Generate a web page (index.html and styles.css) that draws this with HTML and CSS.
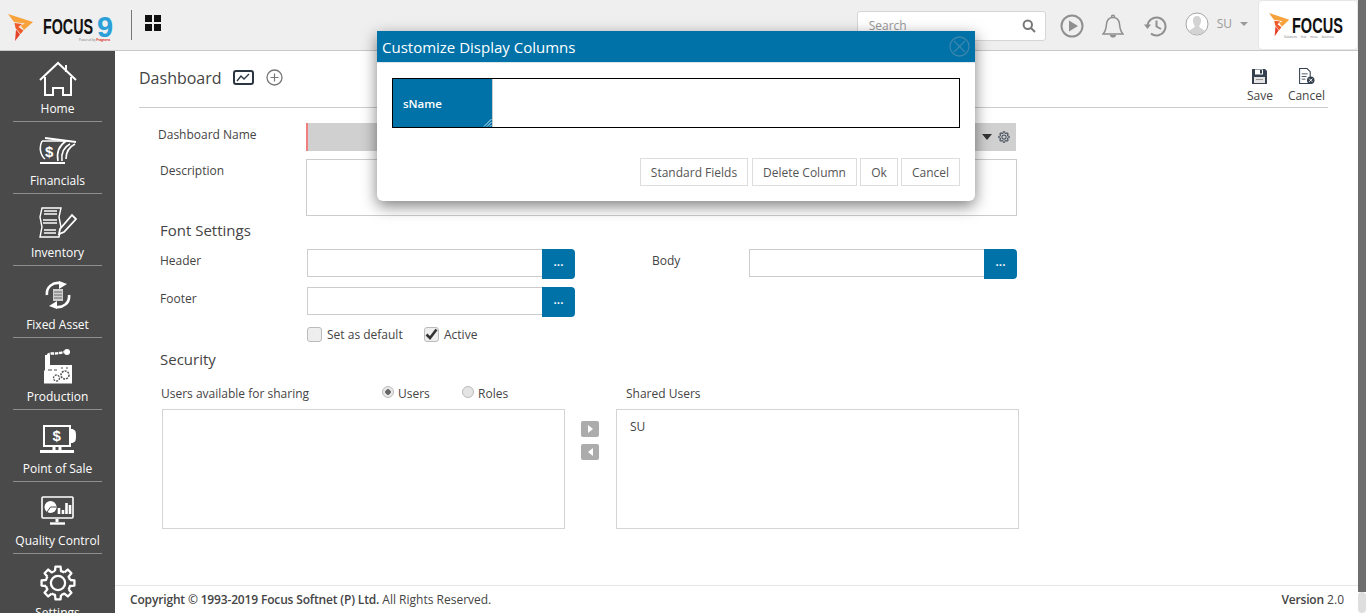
FILE: index.html
```html
<!DOCTYPE html>
<html lang="en">
<head>
    <meta charset="UTF-8">
    <meta name="viewport" content="width=device-width, initial-scale=1.0">
    <title>Dashboard</title>
    <link rel="stylesheet" href="styles.css">
</head>
<body>
    <svg class="defs" width="0" height="0">
        <defs>
            <g id="gear">
                <g id="gear-half">
                    <path id="gear-seg" d="M16.85 7.4 L17.3 2.7 H22.7 L23.15 7.4 A13 13 0 0 1 26.7 8.86"/>
                    <use href="#gear-seg" transform="rotate(45 20 20)"/>
                    <use href="#gear-seg" transform="rotate(90 20 20)"/>
                    <use href="#gear-seg" transform="rotate(135 20 20)"/>
                </g>
                <use href="#gear-half" transform="rotate(180 20 20)"/>
            </g>
            <g id="flame-mark">
                <polygon fill="#f7a23b" points="0,0 25,8 16,16 12.500,11.500 17,9.500 6,8"/>
                <polygon fill="#ee5a2a" points="6.500,9 14,10 10.500,13 15.500,16.500 12.500,20 7.500,14"/>
                <polygon fill="#e5402a" points="8,15.500 12,20.500 7,27"/>
            </g>
        </defs>
    </svg>

    <div class="page">
        <div class="app">
            <!-- Top bar -->
            <header class="topbar">
                <div class="brand">
                    <svg class="flame" width="26" height="28" viewBox="0 0 26 28"><use href="#flame-mark"/></svg>
                    <div class="brand-name">FOCUS</div>
                    <div class="brand-mark">
                        <span class="brand-nine">9</span>
                        <span class="brand-sub">Powered by <b>Pragnera</b></span>
                    </div>
                </div>
                <div class="top-sep"></div>
                <div class="apps-icon"><span></span><span></span><span></span><span></span></div>

                <div class="top-tools">
                    <div class="search">
                        <span>Search</span>
                        <svg width="14" height="14" viewBox="0 0 14 14" fill="none" stroke="#777" stroke-width="2"><circle cx="5.800" cy="5.800" r="4.200"/><path d="M9 9 L13 13"/></svg>
                    </div>
                    <svg class="tool-play" width="24" height="24" viewBox="0 0 24 24" fill="none" stroke="#8f8f8f" stroke-width="2"><circle cx="12" cy="12" r="10.500"/><polygon fill="#8f8f8f" stroke="none" points="9,6.500 18,12 9,17.500"/></svg>
                    <svg class="tool-bell" width="22" height="24" viewBox="0 0 22 24" fill="none" stroke="#8f8f8f" stroke-width="1.500"><path d="M1 20 C4 17 4 14 4.500 10 C5 6 7.500 3.500 11 3.500 C14.500 3.500 17 6 17.500 10 C18 14 18 17 21 20 Z"/><path d="M9.500 3 C9.500 .8 12.500 .8 12.500 3"/><path d="M8.500 21 C9 23.500 13 23.500 13.500 21" fill="#8f8f8f"/></svg>
                    <svg class="tool-history" width="23" height="22" viewBox="0 0 23 22" fill="none" stroke="#8f8f8f" stroke-width="2"><path d="M3.500 11 A9 9 0 1 1 7 18.600"/><polygon fill="#8f8f8f" stroke="none" points="0,9.500 7,9.500 3.500,14"/><path d="M12.500 5.500 V11.500 L17 14"/></svg>
                    <svg class="tool-user" width="24" height="24" viewBox="0 0 24 24"><circle cx="12" cy="12" r="11" fill="#fff" stroke="#a5a5a5" stroke-width="1"/><path fill="#d3d3d3" d="M12 4 C15 4 16.500 6.500 16 9.500 C15.700 11.500 14.800 13 14 14 C14.500 16 18 17 20 19 A11 11 0 0 1 4 19 C6 17 9.500 16 10 14 C9.200 13 8.300 11.500 8 9.500 C7.500 6.500 9 4 12 4 Z"/></svg>
                    <span class="user-name">SU</span>
                    <span class="user-caret"></span>
                    <div class="logo-box">
                        <svg class="logo-flame" width="21" height="24" viewBox="0 0 26 28" preserveAspectRatio="none"><use href="#flame-mark"/></svg>
                        <div class="logo-text">
                            <div class="logo-name">FOCUS</div>
                            <div class="logo-sub">Solutions that move business</div>
                        </div>
                    </div>
                </div>
            </header>

            <div class="body-wrap">
                <!-- Left menu -->
                <nav class="sidebar">
                    <div class="nav-item">
                        <div class="nav-icon">
                            <svg width="38" height="36" viewBox="0 0 38 36" fill="none" stroke="#fff" stroke-width="2"><path d="M1 19 L19 2 L37 19"/><path d="M27 4 V11"/><path d="M6 16 V34 H14 V27 H24 V34 H32 V16"/></svg>
                        </div>
                        <div class="nav-label">Home</div>
                    </div>
                    <div class="nav-item">
                        <div class="nav-icon">
                            <svg width="38" height="28" viewBox="0 0 38 28" fill="none" stroke="#fff" stroke-width="1.600"><path d="M6 1 L37 5" stroke-width="2"/><path d="M3 4 H27 C21 8 17 14 19 24"/><path d="M3 4 C0 10 1 18 6 22"/><path d="M31 7 C25 10 22 16 23 24"/><path d="M36 7 C30 10 27 15 27 22"/><path d="M1 26 H26" stroke-width="2"/><text x="6" y="20" class="icon-dollar">$</text></svg>
                        </div>
                        <div class="nav-label">Financials</div>
                    </div>
                    <div class="nav-item">
                        <div class="nav-icon">
                            <svg width="38" height="31" viewBox="0 0 38 31" fill="none" stroke="#fff" stroke-width="1.400"><path d="M3 1 H22 L20 10 L22 20 L20 30 H1 L3 20 L1 10 Z"/><path d="M5 4 H18 M5 7 H18 M4 13 H18 M4 16 H18 M5 23 H17 M5 26 H17" stroke="#cfcfcf" stroke-width="2"/><path d="M21 22 L33 8 L37 12 L25 25 L20 27 Z" fill="#4a4a4a" stroke-width="1.800"/></svg>
                        </div>
                        <div class="nav-label">Inventory</div>
                    </div>
                    <div class="nav-item">
                        <div class="nav-icon">
                            <svg width="26" height="28" viewBox="0 0 26 28" fill="none" stroke="#fff" stroke-width="2.600"><path d="M2 14 C1 6 8 1 15 2"/><polygon fill="#fff" stroke="none" points="14,0 22,3 14,8"/><path d="M24 14 C25 22 18 27 11 26"/><polygon fill="#fff" stroke="none" points="12,20 12,28 4,25"/><path d="M8 8 H18 V20 H8 Z" fill="#cfcfcf" stroke="none"/><path d="M9 11 H17 M9 14 H17 M9 17 H17" stroke="#666" stroke-width="1"/></svg>
                        </div>
                        <div class="nav-label">Fixed Asset</div>
                    </div>
                    <div class="nav-item">
                        <div class="nav-icon">
                            <svg width="30" height="36" viewBox="0 0 30 36"><path d="M4.500 7 C5 4 8 4.500 10 4.500 C14 4.500 17 4 21 3" fill="none" stroke="#fff" stroke-width="2.400" stroke-dasharray="3.500 .8"/><circle cx="24" cy="3" r="3" fill="#fff"/><path fill="#fff" d="M2 6 H7 V16 H29 V34.500 H1 V22 L2 21 Z"/><path d="M5 21 H9 M11 21 H14 M18 19 H20 M23 19 H25" stroke="#888" stroke-width="1.500"/><circle cx="22" cy="26" r="4" fill="#fff" stroke="#555" stroke-width="1.600" stroke-dasharray="2 1"/><circle cx="13.500" cy="29" r="3" fill="#fff" stroke="#555" stroke-width="1.300" stroke-dasharray="2 1"/></svg>
                        </div>
                        <div class="nav-label">Production</div>
                    </div>
                    <div class="nav-item">
                        <div class="nav-icon">
                            <svg width="36" height="28" viewBox="0 0 36 28" fill="none" stroke="#fff" stroke-width="2"><rect x="4" y="1" width="26" height="20"/><path d="M31 4 C35 4 36 6 36 11 C36 16 35 18 31 18" fill="#fff" stroke="none"/><path d="M14 21 V25 M20 21 V25" stroke-width="3"/><path d="M0 26.500 H34" stroke-width="3"/><text x="12.500" y="16" class="icon-dollar">$</text></svg>
                        </div>
                        <div class="nav-label">Point of Sale</div>
                    </div>
                    <div class="nav-item">
                        <div class="nav-icon">
                            <svg width="33" height="29" viewBox="0 0 33 29" fill="none" stroke="#fff" stroke-width="1.600"><rect x="1" y="1" width="31" height="21" rx="1"/><circle cx="9.500" cy="11" r="6" fill="#fff" stroke="none"/><path d="M9.500 11 L15 11 M9.500 11 L6 16" stroke="#4a4a4a" stroke-width="1"/><path d="M18 18 V12 M22 18 V14 M25.500 18 V7 M29 18 V9" stroke-width="2.600"/><path d="M16 23 V26" stroke-width="3"/><path d="M9 27.500 H24" stroke-width="2.400"/></svg>
                        </div>
                        <div class="nav-label">Quality Control</div>
                    </div>
                    <div class="nav-item">
                        <div class="nav-icon">
                            <svg width="38" height="38" viewBox="0 0 40 40" fill="none" stroke="#fff" stroke-width="2.400" stroke-linejoin="round"><use href="#gear"/><circle cx="20" cy="20" r="7.500"/></svg>
                        </div>
                        <div class="nav-label">Settings</div>
                    </div>
                </nav>

                <main class="main">
                    <div class="content">
                        <div class="title-bar">
                            <h1>Dashboard</h1>
                            <svg class="chart-icon" width="21" height="15" viewBox="0 0 21 15" fill="none"><rect x="1" y="1" width="19" height="13" rx="2" stroke="#2b3642" stroke-width="2"/><path d="M4 11 L8 6 L11 9 L16 4" stroke="#2b3642" stroke-width="1.300"/></svg>
                            <svg class="plus-icon" width="17" height="17" viewBox="0 0 17 17" fill="none" stroke="#777"><circle cx="8.500" cy="8.500" r="7.500" stroke-width="1.300"/><path d="M8.500 4.500 V12.500 M4.500 8.500 H12.500" stroke-width="1.200"/></svg>
                            <div class="title-actions">
                                <div class="action action-save">
                                    <svg width="17" height="17" viewBox="0 0 17 17"><path fill="#35414f" d="M1 1 H14 L16 3 V16 H1 Z"/><rect x="4" y="1.500" width="8" height="5" fill="#fff"/><rect x="9" y="2" width="2" height="3.500" fill="#35414f"/><rect x="3" y="9" width="11" height="6" fill="#e4e4e4"/><rect x="5" y="11" width="7" height="1" fill="#999"/></svg>
                                    <span>Save</span>
                                </div>
                                <div class="action action-cancel">
                                    <svg width="17" height="17" viewBox="0 0 16 16" fill="none" stroke="#35414f"><path d="M1.500 .5 H8.500 L11.500 3.500 V14.500 H1.500 Z" fill="#fff"/><path d="M3.500 5.500 H9 M3.500 8 H8 M3.500 10.500 H7" stroke-width=".8"/><circle cx="12" cy="11.500" r="3.500" fill="#35414f" stroke="none"/><path d="M10.500 10 L13.500 13 M13.500 10 L10.500 13" stroke="#fff" stroke-width=".9"/></svg>
                                    <span>Cancel</span>
                                </div>
                            </div>
                        </div>

                        <form class="form">
                            <div class="row row-name">
                                <label class="name-label">Dashboard Name</label>
                                <div class="name-input">
                                    <span class="name-caret"></span>
                                    <svg width="12" height="12" viewBox="0 0 40 40" fill="none" stroke="#4b5560" stroke-width="3.500" stroke-linejoin="round"><use href="#gear"/><circle cx="20" cy="20" r="7"/></svg>
                                </div>
                            </div>
                            <div class="row row-desc">
                                <label class="desc-label">Description</label>
                                <div class="desc-input"></div>
                            </div>
                            <h2 class="section font-section">Font Settings</h2>
                            <div class="row row-font">
                                <label class="field-label">Header</label>
                                <div class="picker"><div class="picker-input"></div><div class="picker-btn">...</div></div>
                                <label class="body-label">Body</label>
                                <div class="picker"><div class="picker-input"></div><div class="picker-btn">...</div></div>
                            </div>
                            <div class="row row-font row-footer">
                                <label class="field-label">Footer</label>
                                <div class="picker"><div class="picker-input"></div><div class="picker-btn">...</div></div>
                            </div>
                            <div class="row row-check">
                                <span class="check"></span>
                                <span class="check-text default-text">Set as default</span>
                                <span class="check">
                                    <svg width="13" height="12" viewBox="0 0 13 12"><path d="M1.500 6.500 L5 10 L11.500 1.500" fill="none" stroke="#333" stroke-width="2.600"/></svg>
                                </span>
                                <span class="check-text">Active</span>
                            </div>
                            <h2 class="section security-section">Security</h2>
                            <div class="row row-users">
                                <span class="users-label">Users available for sharing</span>
                                <span class="radio-group group-users"><span class="radio radio-on"></span><span>Users</span></span>
                                <span class="radio-group group-roles"><span class="radio"></span><span>Roles</span></span>
                                <span>Shared Users</span>
                            </div>
                            <div class="row row-lists">
                                <div class="list"></div>
                                <div class="move-btns">
                                    <div class="move-btn"><span class="arrow-right"></span></div>
                                    <div class="move-btn"><span class="arrow-left"></span></div>
                                </div>
                                <div class="list list-shared">SU</div>
                            </div>
                        </form>
                    </div>
                    <footer class="footer">
                        <span><b>Copyright © 1993-2019 Focus Softnet (P) Ltd.</b> All Rights Reserved.</span>
                        <span><b>Version</b> 2.0</span>
                    </footer>
                </main>
            </div>
        </div>
        <div class="scrollbar"><div class="scroll-thumb"></div><div class="scroll-rest"></div></div>
    </div>

    <!-- Customize columns dialog -->
    <div class="modal">
        <div class="modal-head">
            <span>Customize Display Columns</span>
            <svg width="21" height="21" viewBox="0 0 21 21" fill="none" stroke="#3a86ad"><circle cx="10.500" cy="10.500" r="9.500" stroke-width="1.300"/><path d="M5 5 L16 16 M16 5 L5 16" stroke-width="1.300"/></svg>
        </div>
        <div class="modal-body">
            <div class="columns-box">
                <div class="column-cell">
                    sName
                    <svg class="grip" width="9" height="9" viewBox="0 0 9 9" stroke="#fff" stroke-width=".8"><path d="M1 8.500 L8.500 1 M4 8.500 L8.500 4 M7 8.500 L8.500 7"/></svg>
                </div>
            </div>
            <div class="modal-buttons">
                <button type="button" class="btn-standard">Standard Fields</button>
                <button type="button" class="btn-delete">Delete Column</button>
                <button type="button" class="btn-ok">Ok</button>
                <button type="button" class="btn-cancel">Cancel</button>
            </div>
        </div>
    </div>
</body>
</html>
```

FILE: styles.css
```css
* {
    box-sizing: border-box;
}
html, body {
    margin: 0;
    padding: 0;
    height: 100%;
    overflow: hidden;
}
body {
    font-family: "Open Sans", Arial, sans-serif;
    font-size: 12px;
    color: #444;
    background-color: #fff;
}
.defs {
    position: absolute;
}
.page {
    display: flex;
    height: 613px;
}
.app {
    flex: 1;
    min-width: 0;
    display: flex;
    flex-direction: column;
}
.scrollbar {
    width: 8px;
    display: flex;
    flex-direction: column;
}
.scroll-thumb {
    height: 592px;
    background-color: #6e6e6e;
}
.scroll-rest {
    flex: 1;
    background-color: #dedede;
    border-radius: 4px;
}

/* Top bar */
.topbar {
    height: 51px;
    flex: none;
    display: flex;
    align-items: center;
    background-color: #efefef;
    border-bottom: 1px solid #c8c8c8;
}
.brand {
    display: flex;
    align-items: flex-start;
    padding: 14px 0 0 8px;
    height: 50px;
    width: 131px;
}
.flame {
    flex: none;
}
.brand-name {
    width: 50px;
    margin: 3px 0 0 9px;
    font-family: "Liberation Sans", Arial, sans-serif;
    font-weight: 700;
    font-size: 22px;
    line-height: 20px;
    color: #111;
    transform: scaleX(.65);
    transform-origin: left;
}
.brand-mark {
    margin: 2px 0 0 4px;
    width: 18px;
    display: flex;
    flex-direction: column;
    align-items: flex-start;
}
.brand-nine {
    font-family: "Liberation Sans", Arial, sans-serif;
    font-weight: 700;
    font-size: 29px;
    line-height: 22px;
    color: #2a9fd8;
}
.brand-sub {
    margin-left: -18px;
    font-size: 3px;
    line-height: 4px;
    white-space: nowrap;
    color: #777;
}
.brand-sub b {
    color: #d8342a;
}
.top-sep {
    width: 1px;
    height: 30px;
    background-color: #777;
}
.apps-icon {
    display: grid;
    grid-template-columns: 7px 7px;
    gap: 2px;
    margin: -4px 0 0 13px;
}
.apps-icon span {
    height: 7px;
    background-color: #111;
}
.top-tools {
    margin-left: auto;
    display: flex;
    align-items: center;
}
.search {
    width: 189px;
    height: 30px;
    display: flex;
    align-items: center;
    justify-content: space-between;
    padding: 0 9px 0 11px;
    background-color: #fff;
    border: 1px solid #d6d6d6;
    border-radius: 3px;
    color: #999;
    margin-top: 1px;
}
.tool-play {
    margin-left: 14px;
    margin-top: 2px;
}
.tool-bell {
    margin-left: 18px;
    margin-top: 2px;
}
.tool-history {
    margin-left: 20px;
    margin-top: 2px;
}
.tool-user {
    margin-left: 18px;
    margin-top: -2px;
}
.user-name {
    margin-left: 8px;
    margin-top: -4px;
    color: #999;
}
.user-caret {
    margin: -3px 0 0 8px;
    border-left: 4px solid transparent;
    border-right: 4px solid transparent;
    border-top: 4px solid #999;
}
.logo-box {
    margin-left: 10px;
    width: 100px;
    height: 50px;
    background-color: #fff;
    border: 1px solid #e6e6e6;
    border-radius: 4px;
    display: flex;
    align-items: flex-start;
    padding: 12px 0 0 10px;
}
.logo-flame {
    flex: none;
}
.logo-text {
    width: 50px;
    flex: none;
    margin-left: 2px;
}
.logo-name {
    font-family: "Liberation Sans", Arial, sans-serif;
    font-weight: 700;
    font-size: 22px;
    line-height: 19px;
    color: #111;
    transform: scaleX(.66);
    transform-origin: left;
    margin-top: 3px;
}
.logo-sub {
    margin-left: -8px;
    font-size: 3px;
    line-height: 4px;
    color: #777;
    white-space: nowrap;
    word-spacing: 3px;
}

.body-wrap {
    flex: 1;
    min-height: 0;
    display: flex;
}

/* Left menu */
.sidebar {
    width: 115px;
    flex: none;
    background-color: #4a4a4a;
    overflow: hidden;
}
.nav-item {
    height: 72px;
    margin: 0 13px;
    padding-top: 6px;
    display: flex;
    flex-direction: column;
    border-bottom: 1px solid #8e8e8e;
    color: #fff;
    text-align: center;
}
.nav-item:first-child {
    height: 71px;
    padding-top: 5px;
}
.nav-icon {
    flex: 1;
    display: flex;
    align-items: center;
    justify-content: center;
}
.nav-label {
    line-height: 16px;
    padding-bottom: 4px;
    white-space: nowrap;
    margin: 0 -13px;
}
.icon-dollar {
    font-family: "Liberation Sans", Arial, sans-serif;
    font-weight: 700;
    font-size: 15px;
    fill: #fff;
    stroke: none;
}

/* Main area */
.main {
    flex: 1;
    min-width: 0;
    display: flex;
    flex-direction: column;
}
.content {
    flex: 1;
    min-height: 0;
}
.title-bar {
    height: 57px;
    margin: 0 30px 0 24px;
    display: flex;
    align-items: center;
    border-bottom: 1px solid #ccc;
    padding-bottom: 3px;
}
.title-bar h1 {
    margin: 0;
    font-size: 16px;
    font-weight: 400;
    color: #444;
}
.chart-icon {
    margin-left: 11px;
}
.plus-icon {
    margin-left: 12px;
}
.title-actions {
    margin-left: auto;
    align-self: flex-start;
    display: flex;
    padding-top: 17px;
}
.action {
    display: flex;
    flex-direction: column;
    align-items: center;
}
.action svg {
    margin-bottom: 3px;
}
.action span {
    line-height: 16px;
}
.action-save {
    margin-right: 15px;
}
.action-cancel {
    margin-right: 3px;
}
.form {
    padding: 15px 0 0 45px;
}
.row {
    display: flex;
}
.row-name {
    height: 28px;
}
.name-label {
    width: 148px;
    margin-left: -2px;
    line-height: 24px;
}
.name-input {
    width: 710px;
    height: 28px;
    display: flex;
    align-items: center;
    justify-content: flex-end;
    gap: 6px;
    padding-right: 6px;
    background-color: #d0d0d0;
    border-left: 2px solid #f08080;
}
.name-caret {
    border-left: 5px solid transparent;
    border-right: 5px solid transparent;
    border-top: 6px solid #333;
}
.row-desc {
    margin-top: 8px;
}
.desc-label {
    width: 146px;
    line-height: 24px;
}
.desc-input {
    width: 711px;
    height: 57px;
    border: 1px solid #ccc;
}
.section {
    margin: 0;
    font-size: 15px;
    font-weight: 400;
    color: #444;
    line-height: 20px;
}
.font-section {
    padding: 4px 0 9px;
}
.field-label {
    width: 147px;
    line-height: 23px;
}
.row-font {
    height: 30px;
}
.row-footer {
    margin-top: 8px;
}
.picker {
    width: 268px;
    display: flex;
    align-items: flex-start;
}
.picker-input {
    flex: 1;
    height: 28px;
    border: 1px solid #ccc;
    border-right: 0;
}
.picker-btn {
    width: 33px;
    height: 30px;
    background-color: #0072a8;
    border-radius: 0 4px 4px 0;
    color: #fff;
    font-weight: 600;
    text-align: center;
    line-height: 26px;
}
.body-label {
    width: 174px;
    padding-left: 77px;
    line-height: 23px;
}
.row-check {
    margin: 9px 0 0 147px;
    height: 16px;
    align-items: center;
}
.check {
    width: 15px;
    height: 15px;
    display: flex;
    align-items: center;
    justify-content: center;
    background-color: #eee;
    border: 1px solid #bbb;
    border-radius: 3px;
}
.check-text {
    margin-left: 5px;
}
.default-text {
    width: 97px;
}
.security-section {
    padding: 7px 0;
}
.row-users {
    margin: 8px 0 0 1px;
    height: 18px;
    align-items: center;
}
.users-label {
    width: 221px;
}
.radio-group {
    display: flex;
    align-items: center;
    gap: 4px;
}
.group-users {
    width: 80px;
}
.group-roles {
    width: 164px;
}
.radio {
    width: 12px;
    height: 12px;
    margin-top: -2px;
    border-radius: 50%;
    background-color: #e4e4e4;
    border: 1px solid #bbb;
}
.radio-on {
    background: radial-gradient(circle, #666 0 2.5px, #e8e8e8 3px);
}
.row-lists {
    margin: 7px 0 0 2px;
}
.list {
    width: 403px;
    height: 120px;
    border: 1px solid #d4d4d4;
}
.list-shared {
    padding: 8px 13px;
}
.move-btns {
    width: 51px;
    padding: 12px 0 0 16px;
}
.move-btn {
    width: 18px;
    height: 16px;
    margin-bottom: 7px;
    display: flex;
    align-items: center;
    justify-content: center;
    background-color: #acacac;
    border-radius: 2px;
}
.arrow-right {
    border-top: 4px solid transparent;
    border-bottom: 4px solid transparent;
    border-left: 5px solid #fff;
}
.arrow-left {
    border-top: 4px solid transparent;
    border-bottom: 4px solid transparent;
    border-right: 5px solid #fff;
}
.footer {
    height: 28px;
    flex: none;
    display: flex;
    align-items: center;
    justify-content: space-between;
    padding: 0 14px 0 15px;
    border-top: 1px solid #e6e6e6;
}
.footer b {
    font-weight: 600;
    letter-spacing: -.16px;
}

/* Dialog */
.modal {
    position: absolute;
    left: 377px;
    top: 31px;
    width: 598px;
    height: 170px;
    background-color: #fff;
    border-radius: 0 0 6px 6px;
    box-shadow: 0 5px 15px rgba(0, 0, 0, .5);
}
.modal-head {
    height: 32px;
    display: flex;
    align-items: center;
    justify-content: space-between;
    padding: 0 5px;
    background-color: #0072a8;
    border-bottom: 1px solid #d9e6ee;
    color: #fff;
    font-size: 15px;
}
.modal-body {
    padding: 15px 15px 0;
}
.columns-box {
    height: 50px;
    border: 1px solid #000;
}
.column-cell {
    position: relative;
    width: 100px;
    height: 48px;
    padding-left: 10px;
    background-color: #0072a8;
    border-right: 1px solid #ccc;
    color: #fff;
    font-size: 11.5px;
    font-weight: 600;
    line-height: 49px;
}
.grip {
    position: absolute;
    right: 0;
    bottom: 0;
}
.modal-buttons {
    margin-top: 30px;
    display: flex;
    justify-content: flex-end;
}
.modal-buttons button {
    height: 28px;
    padding: 0;
    margin-left: 3px;
    background-color: #fff;
    border: 1px solid #ddd;
    font-family: inherit;
    font-size: 12px;
    color: #555;
}
.btn-standard {
    width: 108px;
}
.modal-buttons .btn-delete {
    width: 105px;
    margin-left: 4px;
}
.btn-ok {
    width: 38px;
}
.btn-cancel {
    width: 59px;
}
```
